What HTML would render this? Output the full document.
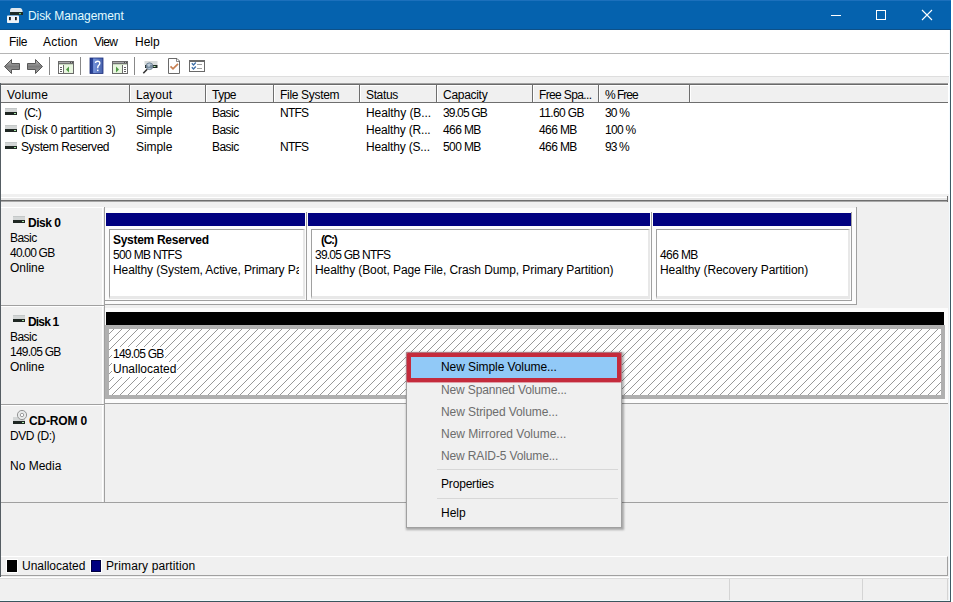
<!DOCTYPE html>
<html><head><meta charset="utf-8">
<style>
*{box-sizing:border-box}
html,body{margin:0;padding:0;width:953px;height:602px;overflow:hidden;background:#fff;position:relative;font-family:"Liberation Sans",sans-serif}
.a{position:absolute}
.t{position:absolute;font-size:12px;line-height:15px;white-space:nowrap;color:#000}
.b{font-weight:bold}
.g{color:#6d6d6d}
</style></head><body>
<!-- title bar -->
<div class="a" style="left:0;top:0;width:951px;height:30px;background:#0562ae"></div><div class="a" style="left:0;top:0;width:951px;height:1px;background:#1c70bc"></div><div class="a" style="left:0;top:29px;width:951px;height:1px;background:#0d5088"></div>
<div class="t" style="left:28px;top:9px;color:#e2fbff;letter-spacing:-0.07px">Disk Management</div>
<svg class="a" style="left:0;top:0" width="30" height="30" shape-rendering="geometricPrecision">
<path d="M10 11 Q10 8 12 8 L20 8 Q22 8 22.5 11 L23 15 L10 15 Z" fill="#dfe8ee"/>
<rect x="10" y="12" width="13" height="3" fill="#1c2a28"/>
<rect x="19" y="13" width="2" height="1.2" fill="#6cd070"/>
<rect x="7" y="15.5" width="12" height="7.5" rx="0.8" fill="#eef3f8"/>
<rect x="9" y="17" width="1.8" height="3.2" fill="#1a1a1a"/>
<rect x="15" y="17" width="1.8" height="3.2" fill="#1a1a1a"/>
</svg>
<svg class="a" style="left:820px;top:0" width="130" height="30">
<rect x="11" y="15" width="10" height="1" fill="#fff"/>
<rect x="56.5" y="10.5" width="9" height="9" fill="none" stroke="#fff" stroke-width="1"/>
<path d="M102 10 L112 20 M112 10 L102 20" stroke="#fff" stroke-width="1.1"/>
</svg>

<!-- window border -->
<!-- menu bar -->
<div class="a" style="left:0;top:30px;width:950px;height:23px;background:#fff"></div>
<div class="a" style="left:0;top:53px;width:950px;height:1px;background:#b5b5b5"></div>
<div class="t" style="left:9px;top:35px;letter-spacing:-0.27px">File</div>
<div class="t" style="left:43px;top:35px;letter-spacing:0.20px">Action</div>
<div class="t" style="left:94px;top:35px;letter-spacing:-0.60px">View</div>
<div class="t" style="left:135px;top:35px">Help</div>
<!-- toolbar -->
<div class="a" style="left:0;top:54px;width:950px;height:23px;background:#fff"></div>
<div class="a" style="left:0;top:76px;width:950px;height:7px;background:#f0f0f0"></div><div class="a" style="left:0;top:76px;width:950px;height:1px;background:#dedede"></div>
<div class="a" style="left:49px;top:57px;width:1px;height:18px;background:#888"></div>
<div class="a" style="left:80px;top:57px;width:1px;height:18px;background:#888"></div>
<div class="a" style="left:134px;top:57px;width:1px;height:18px;background:#888"></div>

<svg class="a" style="left:0;top:54px" width="220" height="23">
<defs>
<linearGradient id="ag" x1="0" y1="0" x2="0" y2="1"><stop offset="0" stop-color="#bdbdbd"/><stop offset="0.5" stop-color="#7c7c7c"/><stop offset="1" stop-color="#a4a4a4"/></linearGradient>
<linearGradient id="hb" x1="0" y1="0" x2="1" y2="0"><stop offset="0" stop-color="#243c90"/><stop offset="0.22" stop-color="#2c4698"/><stop offset="0.28" stop-color="#7895dc"/><stop offset="0.5" stop-color="#6482cc"/><stop offset="1" stop-color="#4660aa"/></linearGradient>
</defs>
<g transform="translate(0,-54)">
<!-- back/forward -->
<path d="M4.5 66.5 L11.5 59.5 L11.5 63.5 L19.5 63.5 L19.5 69.5 L11.5 69.5 L11.5 73.5 Z" fill="url(#ag)" stroke="#585858" stroke-width="1" stroke-linejoin="round"/>
<path d="M42.5 66.5 L35.5 59.5 L35.5 63.5 L27.5 63.5 L27.5 69.5 L35.5 69.5 L35.5 73.5 Z" fill="url(#ag)" stroke="#585858" stroke-width="1" stroke-linejoin="round"/>
<!-- window icon 1 -->
<rect x="58.5" y="61.5" width="15" height="12" fill="#fff" stroke="#6a6a6a"/>
<rect x="59" y="62" width="14" height="1" fill="#a8a8a8"/>
<rect x="70" y="62" width="1" height="1" fill="#505050"/><rect x="72" y="62" width="1" height="1" fill="#505050"/>
<rect x="59" y="63" width="14" height="1" fill="#707070"/>
<rect x="59" y="64" width="14" height="1" fill="#c8d8c0"/>
<rect x="63" y="65" width="1" height="8" fill="#6a6a6a"/>
<rect x="64" y="65" width="9" height="8" fill="#e8f6df"/>
<rect x="60" y="67" width="2" height="1" fill="#606060"/><rect x="60" y="69" width="2" height="1" fill="#606060"/><rect x="60" y="71" width="2" height="1" fill="#606060"/>
<path d="M66 69.5 L69 66.5 L69 72.5 Z" fill="#4f9a45"/>
<!-- help -->
<rect x="90" y="58" width="13" height="15.5" fill="url(#hb)" stroke="#1d2f7a" stroke-width="0.8"/>
<path d="M95.4 63 Q95.6 61.2 97.7 61.2 Q99.8 61.2 99.8 63.2 Q99.8 64.6 98.4 65.6 Q97.7 66.2 97.7 68.2" fill="none" stroke="#fff" stroke-width="1.4"/>
<rect x="97" y="69.6" width="1.5" height="1.5" fill="#fff"/>
<!-- window icon 2 -->
<rect x="112.5" y="61.5" width="15" height="12" fill="#fff" stroke="#6a6a6a"/>
<rect x="113" y="62" width="14" height="1" fill="#a8a8a8"/>
<rect x="124" y="62" width="1" height="1" fill="#505050"/><rect x="126" y="62" width="1" height="1" fill="#505050"/>
<rect x="113" y="63" width="14" height="1" fill="#707070"/>
<rect x="113" y="64" width="14" height="1" fill="#c8d8c0"/>
<rect x="122" y="65" width="1" height="8" fill="#6a6a6a"/>
<rect x="113" y="65" width="9" height="8" fill="#e8f6df"/>
<rect x="124" y="67" width="2" height="1" fill="#606060"/><rect x="124" y="69" width="2" height="1" fill="#606060"/><rect x="124" y="71" width="2" height="1" fill="#606060"/>
<path d="M119 69.5 L116 66.5 L116 72.5 Z" fill="#4f9a45"/>
<!-- drive + magnifier -->
<rect x="144.5" y="61" width="13" height="4" fill="#d8dcdc"/>
<rect x="145" y="65" width="12.5" height="3" fill="#1e2b26"/>
<rect x="153.5" y="66" width="2" height="1" fill="#b8f0b8"/>
<circle cx="149.5" cy="66.2" r="3.4" fill="rgba(150,175,200,0.75)" stroke="#6f8090" stroke-width="0.9"/>
<circle cx="148.8" cy="65.5" r="1.3" fill="rgba(230,240,250,0.6)"/>
<path d="M147.2 69.3 L143.3 73.3" stroke="#333" stroke-width="1.6"/>
<!-- doc check -->
<path d="M168.5 58.5 L177 58.5 L179.5 61 L179.5 73.5 L168.5 73.5 Z" fill="#fff" stroke="#6a6a6a"/>
<path d="M176.5 58.5 L176.5 61.5 L179.5 61.5" fill="none" stroke="#6a6a6a" stroke-width="0.8"/>
<path d="M170.5 66.3 L173 68.8 L178 63.8" fill="none" stroke="#c98052" stroke-width="1.7"/>
<!-- checklist -->
<rect x="189.5" y="60.5" width="15" height="11" fill="#fff" stroke="#6a6a6a"/>
<rect x="190" y="61" width="14" height="1" fill="#6a6a6a"/>
<path d="M191.8 63.2 L193.5 65 L195.8 62.5" fill="none" stroke="#3f6fa8" stroke-width="1.3"/>
<path d="M191.8 67.2 L193.5 69 L195.8 66.5" fill="none" stroke="#3f6fa8" stroke-width="1.3"/>
<rect x="197" y="64" width="5" height="1" fill="#a0a0a0"/>
<rect x="197" y="68" width="5" height="1" fill="#a0a0a0"/>
</g>
</svg>

<!-- list view -->
<div class="a" style="left:0;top:83px;width:948px;height:1px;background:#a0a0a0"></div><div class="a" style="left:0;top:84px;width:948px;height:1px;background:#6a6a6a"></div>
<div class="a" style="left:1px;top:85px;width:947px;height:17px;background:#f0f0f0;border-top:1px solid #fff"></div>
<div class="a" style="left:1px;top:102px;width:947px;height:1px;background:#6e6e6e"></div>
<div class="a" style="left:1px;top:103px;width:947px;height:91px;background:#fff"></div>
<div class="a" style="left:948px;top:83px;width:2px;height:111px;background:#fff"></div>

<div class="a" style="left:129px;top:84px;width:1px;height:18px;background:#6e6e6e"></div><div class="a" style="left:130px;top:85px;width:1px;height:17px;background:#fff"></div><div class="a" style="left:205px;top:84px;width:1px;height:18px;background:#6e6e6e"></div><div class="a" style="left:206px;top:85px;width:1px;height:17px;background:#fff"></div><div class="a" style="left:273px;top:84px;width:1px;height:18px;background:#6e6e6e"></div><div class="a" style="left:274px;top:85px;width:1px;height:17px;background:#fff"></div><div class="a" style="left:359px;top:84px;width:1px;height:18px;background:#6e6e6e"></div><div class="a" style="left:360px;top:85px;width:1px;height:17px;background:#fff"></div><div class="a" style="left:436px;top:84px;width:1px;height:18px;background:#6e6e6e"></div><div class="a" style="left:437px;top:85px;width:1px;height:17px;background:#fff"></div><div class="a" style="left:532px;top:84px;width:1px;height:18px;background:#6e6e6e"></div><div class="a" style="left:533px;top:85px;width:1px;height:17px;background:#fff"></div><div class="a" style="left:598px;top:84px;width:1px;height:18px;background:#6e6e6e"></div><div class="a" style="left:599px;top:85px;width:1px;height:17px;background:#fff"></div><div class="a" style="left:689px;top:84px;width:1px;height:18px;background:#6e6e6e"></div><div class="a" style="left:690px;top:85px;width:1px;height:17px;background:#fff"></div>
<div class="t" style="left:7px;top:88px;letter-spacing:0.18px">Volume</div>
<div class="t" style="left:136px;top:88px">Layout</div>
<div class="t" style="left:212px;top:88px;letter-spacing:-0.50px">Type</div>
<div class="t" style="left:280px;top:88px;letter-spacing:-0.31px">File System</div>
<div class="t" style="left:366px;top:88px;letter-spacing:-0.36px">Status</div>
<div class="t" style="left:443px;top:88px;letter-spacing:-0.29px">Capacity</div>
<div class="t" style="left:539px;top:88px;letter-spacing:-0.64px">Free Spa...</div>
<div class="t" style="left:605px;top:88px;letter-spacing:-1.00px">% Free</div>

<!-- rows -->
<svg class="a" style="left:5px;top:108px" width="13" height="8" shape-rendering="crispEdges"><rect x="0" y="0" width="12" height="4" fill="#d3d6d6"/><rect x="0" y="0" width="12" height="1" fill="#c4c8c8"/><rect x="0" y="4" width="12" height="3" fill="#1f2723"/><rect x="9" y="5" width="2" height="1" fill="#a8e8a8"/></svg><svg class="a" style="left:5px;top:125px" width="13" height="8" shape-rendering="crispEdges"><rect x="0" y="0" width="12" height="4" fill="#d3d6d6"/><rect x="0" y="0" width="12" height="1" fill="#c4c8c8"/><rect x="0" y="4" width="12" height="3" fill="#1f2723"/><rect x="9" y="5" width="2" height="1" fill="#a8e8a8"/></svg><svg class="a" style="left:5px;top:142px" width="13" height="8" shape-rendering="crispEdges"><rect x="0" y="0" width="12" height="4" fill="#d3d6d6"/><rect x="0" y="0" width="12" height="1" fill="#c4c8c8"/><rect x="0" y="4" width="12" height="3" fill="#1f2723"/><rect x="9" y="5" width="2" height="1" fill="#a8e8a8"/></svg>
<div class="t" style="left:24px;top:106px;letter-spacing:-0.77px">(C:)</div>
<div class="t" style="left:21px;top:123px;letter-spacing:-0.14px">(Disk 0 partition 3)</div>
<div class="t" style="left:21px;top:140px;letter-spacing:-0.44px">System Reserved</div>
<div class="t" style="left:136px;top:106px;letter-spacing:-0.06px">Simple</div>
<div class="t" style="left:136px;top:123px;letter-spacing:-0.06px">Simple</div>
<div class="t" style="left:136px;top:140px;letter-spacing:-0.06px">Simple</div>
<div class="t" style="left:212px;top:106px;letter-spacing:-0.55px">Basic</div>
<div class="t" style="left:212px;top:123px;letter-spacing:-0.55px">Basic</div>
<div class="t" style="left:212px;top:140px;letter-spacing:-0.55px">Basic</div>
<div class="t" style="left:280px;top:106px;letter-spacing:-0.77px">NTFS</div>
<div class="t" style="left:280px;top:140px;letter-spacing:-0.77px">NTFS</div>
<div class="t" style="left:366px;top:106px;letter-spacing:-0.08px">Healthy (B...</div>
<div class="t" style="left:366px;top:123px;letter-spacing:-0.17px">Healthy (R...</div>
<div class="t" style="left:366px;top:140px;letter-spacing:-0.17px">Healthy (S...</div>
<div class="t" style="left:443px;top:106px;letter-spacing:-0.86px">39.05 GB</div>
<div class="t" style="left:443px;top:123px;letter-spacing:-0.60px">466 MB</div>
<div class="t" style="left:443px;top:140px;letter-spacing:-0.60px">500 MB</div>
<div class="t" style="left:539px;top:106px;letter-spacing:-0.61px">11.60 GB</div>
<div class="t" style="left:539px;top:123px;letter-spacing:-0.60px">466 MB</div>
<div class="t" style="left:539px;top:140px;letter-spacing:-0.60px">466 MB</div>
<div class="t" style="left:605px;top:106px;letter-spacing:-0.83px">30 %</div>
<div class="t" style="left:605px;top:123px;letter-spacing:-0.70px">100 %</div>
<div class="t" style="left:605px;top:140px;letter-spacing:-0.87px">93 %</div>

<!-- splitter + graphical area -->
<div class="a" style="left:0;top:194px;width:950px;height:383px;background:#f0f0f0"></div>
<div class="a" style="left:1px;top:197px;width:947px;height:1px;background:#fff"></div>
<div class="a" style="left:1px;top:198px;width:947px;height:2px;background:#e6e6e6"></div>
<div class="a" style="left:0;top:200px;width:948px;height:1px;background:#6e6e6e"></div>
<div class="a" style="left:0;top:201px;width:948px;height:1px;background:#a8a8a8"></div><div class="a" style="left:947px;top:196px;width:1px;height:6px;background:#6e6e6e"></div>
<div class="a" style="left:0;top:83px;width:1px;height:494px;background:#555d63"></div>

<!-- row lines -->
<div class="a" style="left:1px;top:207px;width:103px;height:1px;background:#fff"></div>
<div class="a" style="left:1px;top:305px;width:103px;height:1px;background:#a0a0a0"></div>
<div class="a" style="left:1px;top:306px;width:103px;height:1px;background:#fff"></div>
<div class="a" style="left:1px;top:404px;width:103px;height:1px;background:#a0a0a0"></div>
<div class="a" style="left:1px;top:405px;width:103px;height:1px;background:#fff"></div>
<div class="a" style="left:1px;top:502px;width:947px;height:1px;background:#a0a0a0"></div>
<div class="a" style="left:102px;top:208px;width:1px;height:97px;background:#fff"></div><div class="a" style="left:102px;top:307px;width:1px;height:97px;background:#fff"></div><div class="a" style="left:102px;top:406px;width:1px;height:96px;background:#fff"></div>
<div class="a" style="left:104px;top:207px;width:1px;height:296px;background:#a0a0a0"></div>

<!-- disk 0 container -->
<div class="a" style="left:105px;top:208px;width:751px;height:96px;background:#fcfcfc"></div>
<div class="a" style="left:856px;top:207px;width:1px;height:98px;background:#a0a0a0"></div>
<div class="a" style="left:104px;top:304px;width:753px;height:1px;background:#a0a0a0"></div>
<div class="a" style="left:105px;top:300px;width:747px;height:1px;background:#a0a0a0"></div>
<div class="a" style="left:106px;top:213px;width:199px;height:13px;background:#000080"></div>
<div class="a" style="left:308px;top:213px;width:342px;height:13px;background:#000080"></div>
<div class="a" style="left:653px;top:213px;width:198px;height:13px;background:#000080"></div>
<div class="a" style="left:306px;top:212px;width:1px;height:88px;background:#a0a0a0"></div>
<div class="a" style="left:651px;top:212px;width:1px;height:88px;background:#a0a0a0"></div>
<div class="a" style="left:851px;top:212px;width:1px;height:88px;background:#a0a0a0"></div>
<!-- inner boxes -->
<div class="a" style="left:109px;top:229px;width:196px;height:70px;background:#fff;border-top:1px solid #a0a0a0;border-left:1px solid #a0a0a0;border-right:2px solid #e8e8e8;border-bottom:3px solid #e8e8e8"></div>
<div class="a" style="left:311px;top:229px;width:339px;height:70px;background:#fff;border-top:1px solid #a0a0a0;border-left:1px solid #a0a0a0;border-right:2px solid #e8e8e8;border-bottom:3px solid #e8e8e8"></div>
<div class="a" style="left:656px;top:229px;width:194px;height:70px;background:#fff;border-top:1px solid #a0a0a0;border-left:1px solid #a0a0a0;border-right:2px solid #e8e8e8;border-bottom:3px solid #e8e8e8"></div>
<div class="a" style="left:113px;top:233px;width:186px;height:50px;overflow:hidden">
<div class="t b" style="left:0;top:0;letter-spacing:-0.29px">System Reserved</div>
<div class="t" style="left:0;top:15px;letter-spacing:-0.68px">500 MB NTFS</div>
<div class="t" style="left:0;top:30px;letter-spacing:-0.10px">Healthy (System, Active, Primary Partition)</div>
</div>
<div class="t b" style="left:321px;top:233px;letter-spacing:-1.33px">(C:)</div>
<div class="t" style="left:315px;top:248px;letter-spacing:-0.78px">39.05 GB NTFS</div>
<div class="t" style="left:315px;top:263px;letter-spacing:-0.09px">Healthy (Boot, Page File, Crash Dump, Primary Partition)</div>
<div class="t" style="left:660px;top:248px;letter-spacing:-0.60px">466 MB</div>
<div class="t" style="left:660px;top:263px;letter-spacing:-0.07px">Healthy (Recovery Partition)</div>

<!-- disk 1 container -->
<div class="a" style="left:105px;top:308px;width:843px;height:95px;background:#fcfcfc"></div>
<div class="a" style="left:104px;top:403px;width:844px;height:1px;background:#a0a0a0"></div>
<div class="a" style="left:106px;top:312px;width:838px;height:13px;background:#000"></div>
<div class="a" style="left:105px;top:325px;width:840px;height:74px;background:#b0b0b0"></div>
<svg class="a" style="left:109px;top:328px" width="832" height="67">
<defs><pattern id="h" width="8" height="8" patternUnits="userSpaceOnUse">
<rect width="8" height="8" fill="#fff"/>
<g fill="#989898"><rect x="0" y="5" width="1" height="1"/><rect x="1" y="4" width="1" height="1"/><rect x="2" y="3" width="1" height="1"/><rect x="3" y="2" width="1" height="1"/><rect x="4" y="1" width="1" height="1"/><rect x="5" y="0" width="1" height="1"/><rect x="6" y="7" width="1" height="1"/><rect x="7" y="6" width="1" height="1"/></g>
</pattern></defs>
<rect width="832" height="67" fill="url(#h)" shape-rendering="crispEdges"/>
<rect width="832" height="1" fill="#b0b0b0"/>
</svg>
<div class="t" style="left:112px;top:347px;background:#fff;padding-left:1px;padding-right:1px;letter-spacing:-0.75px">149.05 GB</div>
<div class="t" style="left:112px;top:362px;background:#fff;padding-left:1px;padding-right:1px">Unallocated</div>

<!-- disk labels -->
<svg class="a" style="left:13px;top:216px" width="13" height="8" shape-rendering="crispEdges"><rect x="0" y="0" width="12" height="4" fill="#d3d6d6"/><rect x="0" y="0" width="12" height="1" fill="#c4c8c8"/><rect x="0" y="4" width="12" height="3" fill="#1f2723"/><rect x="9" y="5" width="2" height="1" fill="#a8e8a8"/></svg><svg class="a" style="left:13px;top:315px" width="13" height="8" shape-rendering="crispEdges"><rect x="0" y="0" width="12" height="4" fill="#d3d6d6"/><rect x="0" y="0" width="12" height="1" fill="#c4c8c8"/><rect x="0" y="4" width="12" height="3" fill="#1f2723"/><rect x="9" y="5" width="2" height="1" fill="#a8e8a8"/></svg>
<svg class="a" style="left:12px;top:409px" width="16" height="16">
<rect x="1" y="8" width="12" height="4" fill="#d3d6d6"/>
<rect x="1" y="12" width="12" height="3" fill="#1f2723"/><rect x="10" y="13" width="2" height="1" fill="#a8e8a8"/>
<circle cx="10" cy="6" r="4.6" fill="#e8eaea" stroke="#8a8a8a" stroke-width="0.9"/>
<circle cx="10" cy="6" r="1.7" fill="#fff" stroke="#8a8a8a" stroke-width="0.8"/>
</svg>
<div class="t b" style="left:28px;top:216px;letter-spacing:-0.50px">Disk 0</div>
<div class="t" style="left:10px;top:231px;letter-spacing:-0.55px">Basic</div>
<div class="t" style="left:10px;top:246px;letter-spacing:-0.79px">40.00 GB</div>
<div class="t" style="left:10px;top:261px;letter-spacing:-0.06px">Online</div>

<div class="t b" style="left:28px;top:315px;letter-spacing:-0.84px">Disk 1</div>
<div class="t" style="left:10px;top:330px;letter-spacing:-0.55px">Basic</div>
<div class="t" style="left:10px;top:345px;letter-spacing:-0.75px">149.05 GB</div>
<div class="t" style="left:10px;top:360px;letter-spacing:-0.06px">Online</div>

<div class="t b" style="left:29px;top:414px;letter-spacing:-0.17px">CD-ROM 0</div>
<div class="t" style="left:10px;top:429px;letter-spacing:-0.44px">DVD (D:)</div>
<div class="t" style="left:10px;top:459px">No Media</div>

<!-- legend -->
<div class="a" style="left:1px;top:556px;width:947px;height:20px;background:#f0f0f0;border-top:1px solid #fff;border-bottom:1px solid #a0a0a0;border-right:1px solid #a0a0a0"></div>
<div class="a" style="left:6px;top:559px;width:12px;height:14px;background:#fff"></div>
<div class="a" style="left:7px;top:560px;width:10px;height:12px;background:#000"></div>
<div class="t" style="left:22px;top:559px">Unallocated</div>
<div class="a" style="left:90px;top:559px;width:12px;height:14px;background:#fff"></div>
<div class="a" style="left:91px;top:560px;width:10px;height:12px;background:#000080;border:1px solid #000040"></div>
<div class="t" style="left:106px;top:559px;letter-spacing:0.12px">Primary partition</div>

<!-- status bar -->
<div class="a" style="left:0;top:577px;width:950px;height:1px;background:#fff"></div>
<div class="a" style="left:0;top:578px;width:950px;height:22px;background:#f0f0f0"></div><div class="a" style="left:0;top:578px;width:950px;height:1px;background:#dcdcdc"></div>
<div class="a" style="left:729px;top:579px;width:1px;height:21px;background:#d4d4d4"></div>
<div class="a" style="left:862px;top:579px;width:1px;height:21px;background:#d4d4d4"></div>
<div class="a" style="left:947px;top:579px;width:1px;height:21px;background:#d4d4d4"></div>
<div class="a" style="left:0;top:600px;width:951px;height:1px;background:#f0fafc"></div><div class="a" style="left:0;top:601px;width:951px;height:1px;background:#3a565e"></div>
<div class="a" style="left:949px;top:30px;width:1px;height:571px;background:#f4fbff"></div><div class="a" style="left:950px;top:30px;width:1px;height:572px;background:#3f5a64"></div>
<!-- context menu -->
<div class="a" style="left:406px;top:352px;width:216px;height:176px;background:#f0f0f0;border:1px solid #a0a0a0;box-shadow:1px 1px 2px 1px rgba(0,0,0,0.3)"></div>
<div class="a" style="left:407px;top:353px;width:214px;height:29px;background:#91c9f7;border:4px solid #c42b3c;border-radius:1px;box-shadow:0 0 0 1px rgba(205,60,80,0.45)"></div>
<div class="t" style="left:441px;top:360px;letter-spacing:-0.08px">New Simple Volume...</div>
<div class="t g" style="left:441px;top:383px;letter-spacing:-0.14px">New Spanned Volume...</div>
<div class="t g" style="left:441px;top:405px;letter-spacing:-0.08px">New Striped Volume...</div>
<div class="t g" style="left:441px;top:427px">New Mirrored Volume...</div>
<div class="t g" style="left:441px;top:449px;letter-spacing:-0.14px">New RAID-5 Volume...</div>
<div class="a" style="left:437px;top:469px;width:181px;height:1px;background:#d7d7d7"></div>
<div class="t" style="left:441px;top:477px;letter-spacing:-0.18px">Properties</div>
<div class="a" style="left:437px;top:498px;width:181px;height:1px;background:#d7d7d7"></div>
<div class="t" style="left:441px;top:506px">Help</div>
</body></html>
